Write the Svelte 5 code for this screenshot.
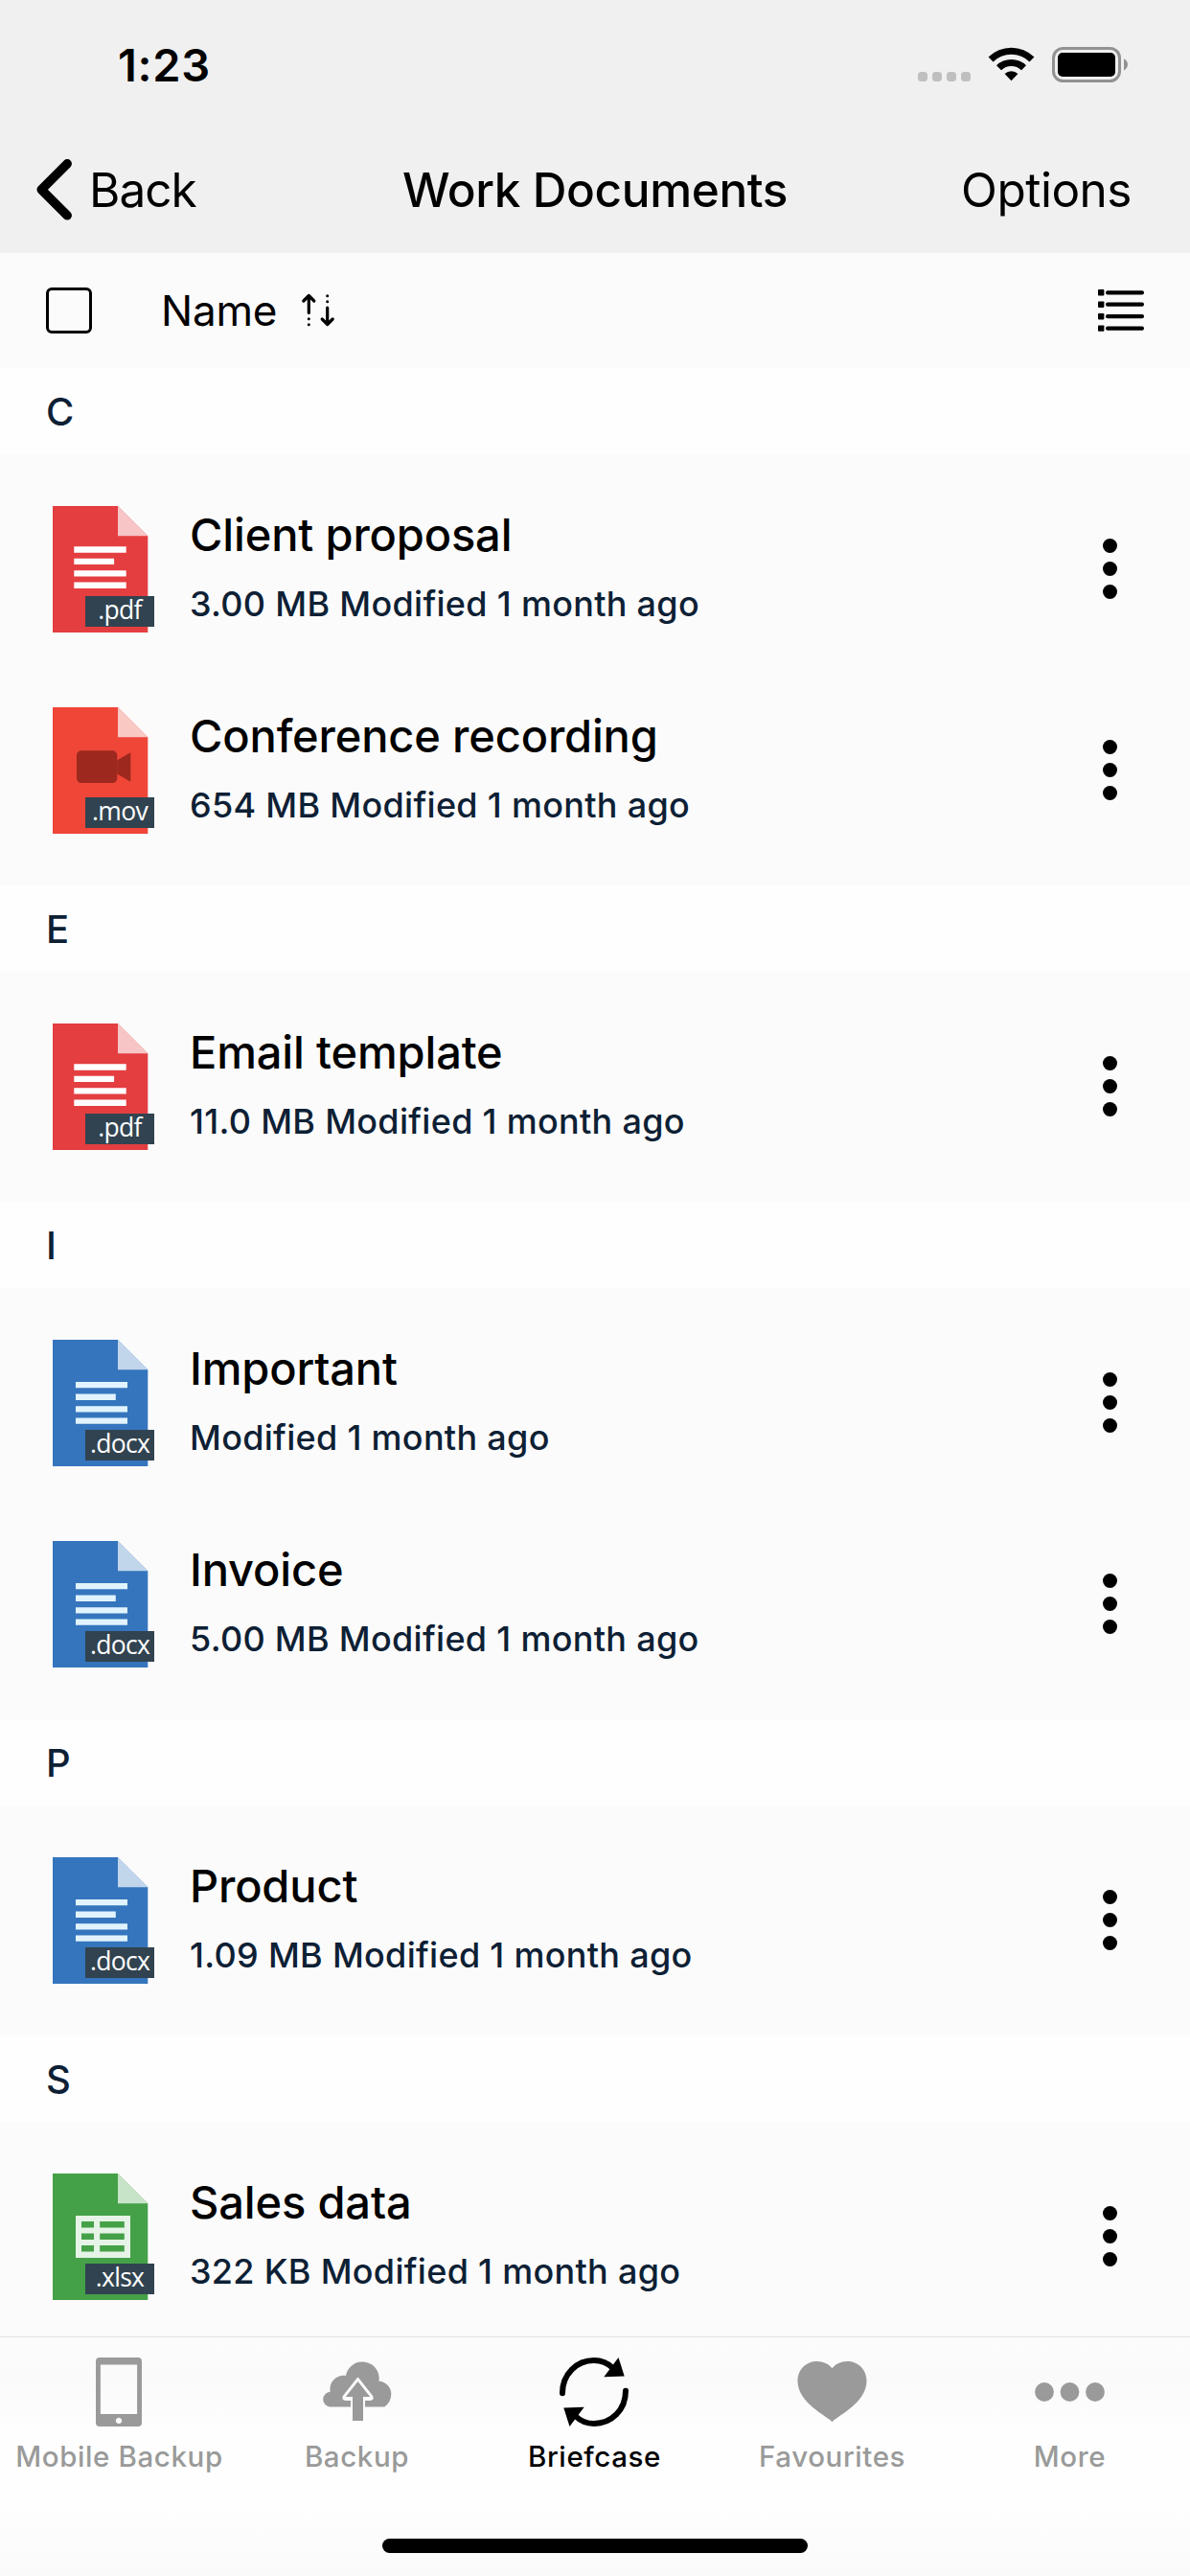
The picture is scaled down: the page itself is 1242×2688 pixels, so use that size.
<script lang="ts">
  type FileItem = { name: string; meta: string; ext: string };

  const groups: { letter: string; items: FileItem[] }[] = [
    {
      letter: 'C',
      items: [
        { name: 'Client proposal', meta: '3.00 MB Modified 1 month ago', ext: 'pdf' },
        { name: 'Conference recording', meta: '654 MB Modified 1 month ago', ext: 'mov' },
      ],
    },
    {
      letter: 'E',
      items: [{ name: 'Email template', meta: '11.0 MB Modified 1 month ago', ext: 'pdf' }],
    },
    {
      letter: 'I',
      items: [
        { name: 'Important', meta: 'Modified 1 month ago', ext: 'docx' },
        { name: 'Invoice', meta: '5.00 MB Modified 1 month ago', ext: 'docx' },
      ],
    },
    {
      letter: 'P',
      items: [{ name: 'Product', meta: '1.09 MB Modified 1 month ago', ext: 'docx' }],
    },
    {
      letter: 'S',
      items: [{ name: 'Sales data', meta: '322 KB Modified 1 month ago', ext: 'xlsx' }],
    },
  ];

  const tabs = ['Mobile Backup', 'Backup', 'Briefcase', 'Favourites', 'More'];
  let activeTab = $state('Briefcase');
</script>

{#snippet fileIcon(ext: string)}
  <svg class="file-icon {ext}" width="106" height="132" viewBox="0 0 106 132">
    <path class="page" d="M0 0H68L99.3 31.3V132H0z" />
    <path d="M68 0L99.3 31.3H68z" fill="#fff" opacity="0.7" />
    {#if ext === 'pdf'}
      <path d="M22.3 42.3h54.4v6.5H22.3zM22.3 54.7h41.8v6.3H22.3zM22.3 67.2h54.4v6.4H22.3zM22.3 79.5h54.4V86H22.3z" fill="#fff" />
    {:else if ext === 'docx'}
      <path d="M24 44h54v6.2H24zM24 56.6h41.8v6.3H24zM24 69.2h54v6.3H24zM24 81.4h54v6.3H24z" fill="#e1f3fe" />
    {:else if ext === 'mov'}
      <rect x="25" y="45.3" width="42.3" height="33.8" rx="5" fill="#9c281e" />
      <path d="M67.3 55.3L81.3 47.2V77.8L67.3 69.5z" fill="#9c281e" />
    {:else}
      <path d="M24 44h57v44H24z" fill="#e6f3e7" />
      <path class="page" d="M30 50h13v6.5H30zM49.2 50h25.6v6.5H49.2zM30 62.5h13V69H30zM49.2 62.5h25.6V69H49.2zM30 75.1h13v6.5H30zM49.2 75.1h25.6v6.5H49.2z" />
    {/if}
    <rect x="34" y="94" width="72" height="32" fill="#314350" />
    <text x="70" y="117.7" text-anchor="middle">.{ext}</text>
  </svg>
{/snippet}

<div class="screen">
  <header>
    <div class="status-bar">
      <span class="time">1:23</span>
      <svg width="220" height="38" viewBox="0 0 220 38">
        <g fill="#bfbfbf">
          <rect x="0" y="26" width="10" height="10" rx="3.5" />
          <rect x="15" y="26" width="10" height="10" rx="3.5" />
          <rect x="30" y="26" width="10" height="10" rx="3.5" />
          <rect x="45" y="26" width="10" height="10" rx="3.5" />
        </g>
        <path d="M73.6 10.5A34 34 0 0 1 121.4 10.5L116.5 15.5A27 27 0 0 0 78.5 15.5z" />
        <path d="M82 19.3A22 22 0 0 1 113 19.3L108 24.3A15 15 0 0 0 87 24.3z" />
        <path d="M90.6 28A10 10 0 0 1 104.4 28L97.5 35.3z" />
        <rect x="141.5" y="1.5" width="69" height="34" rx="10" fill="none" stroke="#929292" stroke-width="3" />
        <rect x="146" y="6" width="60" height="25" rx="5" />
        <path d="M215 12.2Q219 14.5 219 18.3Q219 22 215 24.5z" fill="#929292" />
      </svg>
    </div>
    <nav>
      <button class="back">
        <svg width="37" height="64" viewBox="0 0 37 64" fill="none" stroke="#000" stroke-width="9.5" stroke-linecap="round" stroke-linejoin="round">
          <path d="M32.2 4.8L5.2 31.8L32.2 58.8" />
        </svg>
        <span>Back</span>
      </button>
      <h1>Work Documents</h1>
      <button class="options">Options</button>
    </nav>
  </header>

  <div class="toolbar">
    <span class="checkbox"></span>
    <span class="sort">Name</span>
    <svg width="36" height="40" viewBox="0 0 36 40" fill="none" stroke="#000" stroke-width="3.2" stroke-linecap="round" stroke-linejoin="round">
      <path d="M8.3 5V22.5M2.8 10L8.3 4.5L13.8 10M27.7 17V34M22.2 29L27.7 34.5L33.2 29" />
      <path d="M8.3 28.7v.01M8.3 34.7v.01M27.7 4.7v.01M27.7 10.7v.01" stroke-width="3" />
    </svg>
    <svg class="list-icon" width="48" height="44" viewBox="0 0 48 44">
      {#each [3.3, 15.7, 28.2, 40.6] as y}
        <rect x="0" y={y - 3.2} width="6.4" height="6.4" rx="0.8" />
        <rect x="8" y={y - 2.1} width="40" height="4.2" rx="2" />
      {/each}
    </svg>
  </div>

  <main>
    {#each groups as group}
      <h2>{group.letter}</h2>
      <ul>
        {#each group.items as item}
          <li>
            {@render fileIcon(item.ext)}
            <div class="details">
              <span class="name">{item.name}</span>
              <span class="meta">{item.meta}</span>
            </div>
            <button class="kebab" aria-label="More actions">
              <i></i><i></i><i></i>
            </button>
          </li>
        {/each}
      </ul>
    {/each}
  </main>

  <footer>
    <div class="tabs">
      {#each tabs as tab}
        <button class="tab" class:active={activeTab === tab} onclick={() => (activeTab = tab)}>
          <svg width="73" height="72" viewBox="0 0 73 72" fill="currentColor">
            {#if tab === 'Mobile Backup'}
              <path fill-rule="evenodd" d="M16 0h40a4 4 0 0 1 4 4v64a4 4 0 0 1-4 4H16a4 4 0 0 1-4-4V4a4 4 0 0 1 4-4zM16.9 7.5V59h38.2V7.5zM36 62.8a3.1 3.1 0 1 0 .01 0z" />
            {:else if tab === 'Backup'}
              <path d="M8 51.5A7.9 7.9 0 0 1 8.6 35.8A14.3 14.3 0 0 1 25 19A17.4 17.4 0 0 1 59.5 24.8A13.5 13.5 0 0 1 72.3 38.5Q72.3 46 65.4 51.5z" />
              <path d="M37.5 21.5L22.5 40.5Q20.8 44 25 44.2H30.7V64H44.3V44.2H50Q54.2 44 52.5 40.5z" fill="#fcfcfc" stroke="#fcfcfc" stroke-width="1.5" stroke-linejoin="round" />
              <path d="M37.5 25L24.8 41H32V66H43V41H50.2z" />
            {:else if tab === 'Briefcase'}
              <g id="arrow">
                <path d="M3 37.2C3 17 18 3 36 3C43.5 3 50 5.5 55.5 11" fill="none" stroke="currentColor" stroke-width="6" stroke-linecap="round" />
                <path d="M61.5 0L67.7 19.6L46.3 20.2z" />
              </g>
              <use href="#arrow" transform="rotate(180 36 36)" />
            {:else if tab === 'Favourites'}
              <path d="M36.5 67.2C30 60.5 0.5 47 0.5 24.5C0.5 12 10 4 20.5 4C27.5 4 33 7 36.5 11.3C40 7 45.5 4 52.5 4C63 4 72.5 12 72.5 24.5C72.5 47 43 60.5 36.5 67.2z" />
            {:else}
              <circle cx="10" cy="36" r="9.9" />
              <circle cx="36.5" cy="36" r="9.9" />
              <circle cx="63" cy="36" r="9.9" />
            {/if}
          </svg>
          <span>{tab}</span>
        </button>
      {/each}
    </div>
    <div class="home-indicator"></div>
  </footer>
</div>

<style>
  :global(body) {
    margin: 0;
  }

  .screen {
    width: 1242px;
    height: 2688px;
    display: flex;
    flex-direction: column;
    overflow: hidden;
    background: #fbfbfb;
    color: #000;
    font-family: Inter, 'Liberation Sans', sans-serif;
  }

  button {
    padding: 0;
    border: none;
    background: none;
    color: inherit;
    font: inherit;
  }

  header {
    flex: none;
    height: 264px;
    background: #f0f0f0;
  }

  .status-bar {
    height: 132px;
    padding: 0 64px 0 123px;
    box-sizing: border-box;
    display: flex;
    align-items: center;
    justify-content: space-between;
  }

  .status-bar svg {
    margin-bottom: -4px;
  }

  .time {
    font-size: 47px;
    font-weight: 600;
    letter-spacing: 0.7px;
    margin-top: 3px;
  }

  nav {
    height: 132px;
    padding: 0 61px;
    display: grid;
    grid-template-columns: 1fr auto 1fr;
    align-items: center;
    font-size: 49.5px;
  }

  .back {
    margin-left: -23px;
    display: flex;
    align-items: center;
    gap: 18px;
    letter-spacing: -1px;
  }

  h1 {
    margin: 0;
    font-size: 49.5px;
    font-weight: 500;
    letter-spacing: -0.4px;
  }

  .options {
    justify-self: end;
    letter-spacing: -0.5px;
  }

  .toolbar {
    flex: none;
    height: 120px;
    padding: 0 48px;
    display: flex;
    align-items: center;
    font-size: 44px;
  }

  .checkbox {
    width: 42px;
    height: 42px;
    margin-right: 72px;
    border: 3px solid #000;
    border-radius: 6px;
  }

  .sort {
    margin-right: 25px;
    letter-spacing: -0.2px;
  }

  .list-icon {
    margin-left: auto;
  }

  main {
    flex: 1;
    min-height: 0;
    overflow: hidden;
  }

  h2 {
    margin: 0;
    height: 90px;
    padding-left: 48px;
    line-height: 91px;
    font-size: 40px;
    font-weight: 500;
    color: #0d2034;
    background: #fefefe;
  }

  ul {
    margin: 0;
    padding: 0 0 30px;
    list-style: none;
  }

  li {
    height: 210px;
    padding: 54px 70px 24px 55px;
    box-sizing: border-box;
    display: flex;
  }

  .file-icon text {
    font-family: 'Open Sans', 'Noto Sans', sans-serif;
    font-size: 26.5px;
    letter-spacing: -0.7px;
    fill: #fff;
  }

  .pdf .page {
    fill: #e43e41;
  }

  .mov .page {
    fill: #ef4638;
  }

  .docx .page {
    fill: #3575bd;
  }

  .xlsx .page {
    fill: #45a147;
  }

  .details {
    flex: 1;
    margin-left: 37px;
    display: flex;
    flex-direction: column;
  }

  .name {
    font-size: 47px;
    line-height: 60px;
    font-weight: 450;
    letter-spacing: -0.15px;
  }

  .meta {
    margin-top: 18px;
    font-size: 36px;
    line-height: 48px;
    font-weight: 450;
    letter-spacing: 0.3px;
    color: #0d2034;
  }

  .kebab {
    width: 28px;
    height: 131px;
    display: flex;
    flex-direction: column;
    align-items: center;
    justify-content: center;
    gap: 9px;
  }

  .kebab i {
    width: 15px;
    height: 15px;
    border-radius: 50%;
    background: #000;
  }

  footer {
    flex: none;
    height: 250px;
    box-sizing: border-box;
    border-top: 1px solid #e0e0e0;
    background: linear-gradient(#fcfcfc 0%, #fafafa 18%, #fefefe 40%, #fefefe 70%, #fafafa 100%);
    display: flex;
    flex-direction: column;
    align-items: center;
  }

  .tabs {
    width: 1240px;
    height: 210px;
    margin-right: 1px;
    display: flex;
  }

  .tab {
    width: 248px;
    padding-top: 21px;
    display: flex;
    flex-direction: column;
    align-items: center;
    gap: 12px;
    color: #999a99;
    font-size: 29.5px;
    font-weight: 450;
    letter-spacing: 0.6px;
    line-height: 38px;
    white-space: nowrap;
  }

  .tab.active {
    color: #000;
  }

  .home-indicator {
    width: 444px;
    height: 15px;
    border-radius: 8px;
    background: #000;
  }
</style>
